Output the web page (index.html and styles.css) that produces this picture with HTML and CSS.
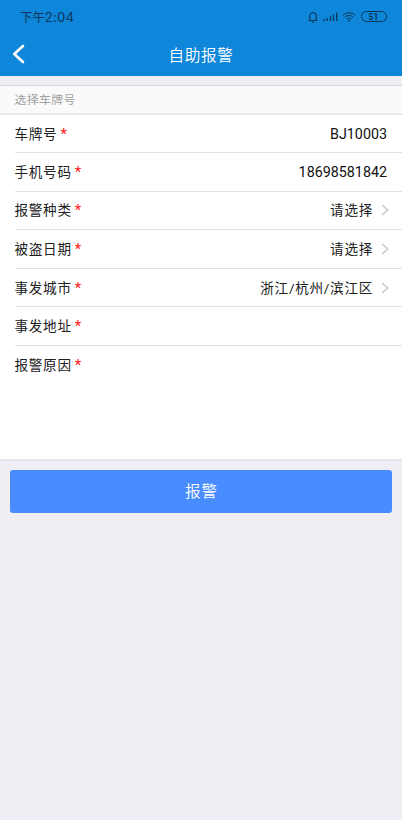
FILE: index.html
```html
<!DOCTYPE html>
<html lang="zh-CN">
<head>
<meta charset="utf-8">
<meta name="viewport" content="width=device-width, initial-scale=1">
<title>自助报警</title>
<link rel="stylesheet" href="styles.css">
</head>
<body>
<header class="header">
  <div class="status">
    <span class="time">下午<span class="clock">2:04</span></span>
    <div class="indicators">
      <svg class="bell" width="10" height="12" viewBox="0 0 10 12"><path d="M.5 9.5h9M1.8 9.5V5a3.2 3.2 0 0 1 6.4 0v4.5M3.8 11.2h2.4M5 .8v1"/></svg>
      <svg class="signal" width="15" height="10" viewBox="0 0 15 10"><path d="M1 7v2M4 6v3M7.5 4.5V9M10.5 2.5V9M13.7 .5V9"/></svg>
      <svg class="wifi" width="14" height="10" viewBox="0 0 14 10"><path d="M.7 3.2a9.2 9.2 0 0 1 12.6 0M2.7 5.2a6.3 6.3 0 0 1 8.6 0M4.7 7.1a3.5 3.5 0 0 1 4.6 0"/><circle cx="7" cy="8.7" r=".9"/></svg>
      <span class="battery">51</span>
    </div>
  </div>
  <div class="nav">
    <svg class="back" width="14" height="20" viewBox="0 0 14 20"><path d="M11 2 2.3 10l8.7 8"/></svg>
    <h1 class="title">自助报警</h1>
  </div>
</header>
<main>
  <div class="section">选择车牌号</div>
  <div class="form">
    <div class="row"><span class="label">车牌号<b>*</b></span><span class="value number">BJ10003</span></div>
    <div class="row"><span class="label">手机号码<b>*</b></span><span class="value number">18698581842</span></div>
    <div class="row"><span class="label">报警种类<b>*</b></span><span class="value">请选择</span><svg class="chevron" width="8" height="12" viewBox="0 0 8 12"><path d="m1.2 1 5.6 5-5.6 5"/></svg></div>
    <div class="row"><span class="label">被盗日期<b>*</b></span><span class="value">请选择</span><svg class="chevron" width="8" height="12" viewBox="0 0 8 12"><path d="m1.2 1 5.6 5-5.6 5"/></svg></div>
    <div class="row"><span class="label">事发城市<b>*</b></span><span class="value">浙江/杭州/滨江区</span><svg class="chevron" width="8" height="12" viewBox="0 0 8 12"><path d="m1.2 1 5.6 5-5.6 5"/></svg></div>
    <div class="row"><span class="label">事发地址<b>*</b></span></div>
    <div class="row reason"><span class="label">报警原因<b>*</b></span></div>
  </div>
  <button class="submit" type="button">报警</button>
</main>
</body>
</html>
```

FILE: styles.css
```css
* { box-sizing: border-box; }
body {
  margin: 0;
  min-height: 820px;
  background: #efeef4;
  color: #202020;
  font-family: Roboto, "Noto Sans CJK SC", sans-serif;
  font-size: 13.6px;
}
svg { display: block; flex: none; fill: none; stroke-linejoin: round; }
.header { height: 76px; background: #0e86da; }
.status {
  height: 33px;
  padding: 0 15.5px 0 20px;
  display: flex;
  align-items: center;
  justify-content: space-between;
  color: #0a3557;
}
.time { font-size: 12.4px; line-height: 20px; padding-top: 2px; }
.clock { font-family: Inter, Roboto, sans-serif; font-size: 13.2px; letter-spacing: .2px; }
.indicators { display: flex; align-items: center; }
.bell, .signal, .wifi { stroke: #0a3557; }
.bell { margin-right: 5px; stroke-width: 1.1; }
.signal { margin-right: 4px; stroke-width: 1.3; }
.wifi { margin-right: 5px; stroke-width: 1; }
.wifi circle { fill: #0a3557; stroke: none; }
.battery {
  width: 26px;
  height: 11px;
  border: 1.5px solid #0a3557;
  border-radius: 5.5px;
  font-size: 8.5px;
  font-weight: 700;
  line-height: 10px;
  text-align: center;
}
.nav {
  height: 42px;
  padding: 0 12px;
  display: grid;
  grid-template-columns: 14px 1fr 14px;
  align-items: center;
}
.back { stroke: #fff; stroke-width: 2.6; stroke-linecap: round; }
.title {
  margin: 0;
  padding: 3px 0 0 0;
  color: #fff;
  font-size: 15.6px;
  font-weight: 350;
  letter-spacing: .7px;
  line-height: 24px;
  text-align: center;
}
.section {
  height: 30px;
  margin-top: 9px;
  padding-left: 14.5px;
  border-top: 1px solid #dadadf;
  border-bottom: 2px solid #e9e9e9;
  background: #fafafa;
  color: #a2a2a2;
  font-size: 11.8px;
  letter-spacing: .45px;
  line-height: 29px;
}
.form {
  height: 346px;
  padding-left: 14.5px;
  border-bottom: 2px solid #e7e7e9;
  background: #fff;
}
.row {
  height: 38.6px;
  padding-right: 13px;
  display: flex;
  align-items: center;
  border-bottom: 1px solid #e1e1e1;
}
.row:first-child { height: 38px; }
.reason { border-bottom: 0; }
.label, .value { padding-bottom: 2px; letter-spacing: .7px; }
.label b {
  margin-left: 3px;
  color: #ff1515;
  font-size: 15px;
  font-weight: 400;
  line-height: 1;
}
.value { margin-left: auto; }
.number {
  padding: 0 2px 0 0;
  color: #111;
  font-size: 14.3px;
  letter-spacing: 0;
}
.chevron { margin-left: 8px; stroke: #c7c7cc; stroke-width: 1.5; }
.submit {
  display: block;
  width: 382px;
  height: 43px;
  margin: 9px 0 0 10.4px;
  padding: 2px 0 0;
  border: 0;
  border-radius: 3px;
  background: #488cff;
  color: #fff;
  font: 350 15.6px/41px Roboto, "Noto Sans CJK SC", sans-serif;
  letter-spacing: .7px;
}
```
